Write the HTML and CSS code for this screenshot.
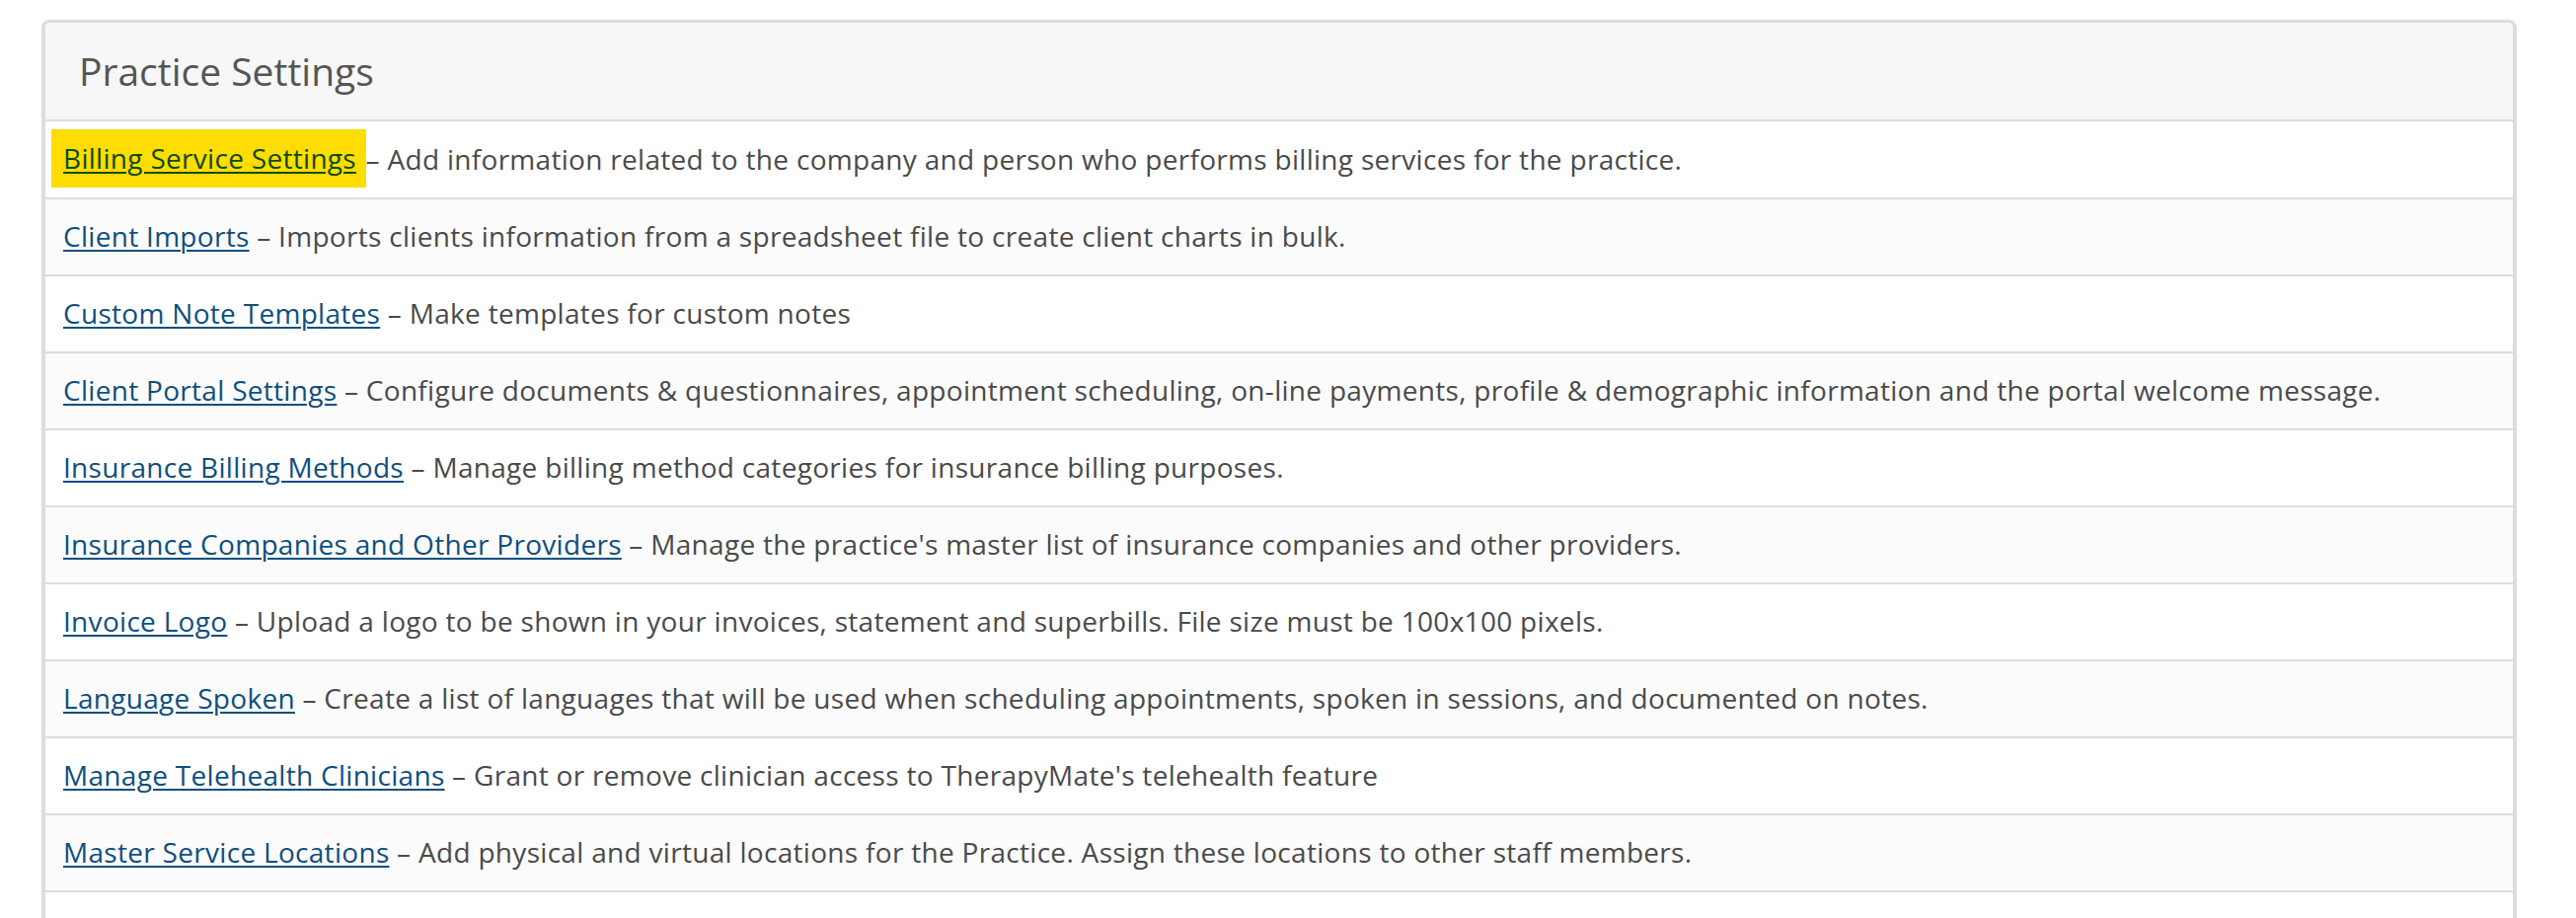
FILE: index.html
```html
<!DOCTYPE html>
<html lang="en">
<head>
<meta charset="utf-8">
<title>Practice Settings</title>
<link rel="stylesheet" href="styles.css">
</head>
<body>
<div class="page">
  <div class="panel">
    <div class="panel-heading">Practice Settings</div>
    <ul class="list">
      <li class="item first"><span class="hl"><a href="#">Billing Service Settings</a> </span>– Add information related to the company and person who performs billing services for the practice.</li>
      <li class="item"><a href="#">Client Imports</a> – Imports clients information from a spreadsheet file to create client charts in bulk.</li>
      <li class="item"><a href="#">Custom Note Templates</a> – Make templates for custom notes</li>
      <li class="item"><a href="#">Client Portal Settings</a> – Configure documents &amp; questionnaires, appointment scheduling, on-line payments, profile &amp; demographic information and the portal welcome message.</li>
      <li class="item"><a href="#">Insurance Billing Methods</a> – Manage billing method categories for insurance billing purposes.</li>
      <li class="item"><a href="#">Insurance Companies and Other Providers</a> – Manage the practice's master list of insurance companies and other providers.</li>
      <li class="item"><a href="#">Invoice Logo</a> – Upload a logo to be shown in your invoices, statement and superbills. File size must be 100x100 pixels.</li>
      <li class="item"><a href="#">Language Spoken</a> – Create a list of languages that will be used when scheduling appointments, spoken in sessions, and documented on notes.</li>
      <li class="item"><a href="#">Manage Telehealth Clinicians</a> – Grant or remove clinician access to TherapyMate's telehealth feature</li>
      <li class="item"><a href="#">Master Service Locations</a> – Add physical and virtual locations for the Practice. Assign these locations to other staff members.</li>
      <li class="item"></li>
    </ul>
  </div>
</div>
</body>
</html>
```
FILE: styles.css
```css
html, body {
  margin: 0;
  padding: 0;
  background: #ffffff;
}
body {
  font-family: "Open Sans", "Liberation Sans", sans-serif;
  color: #4a4a4a;
  overflow: hidden;
}
.page {
  padding: 20px 60px 0 42px;
}
.panel {
  border: 4px solid #dddddd;
  border-top-width: 3px;
  border-bottom: none;
  border-radius: 8px 8px 0 0;
  overflow: hidden;
}
.panel-heading {
  background: #f7f7f7;
  height: 96px;
  padding-bottom: 2px;
  display: flex;
  align-items: center;
  padding-left: 34px;
  font-size: 39px;
  color: #555555;
  border-bottom: 2px solid #dddddd;
}
.list {
  list-style: none;
  margin: 0;
  padding: 0;
}
.item {
  height: 74px;
  padding-bottom: 2px;
  display: flex;
  align-items: center;
  padding-left: 18px;
  font-size: 28px;
  letter-spacing: 0.3px;
  white-space: pre;
  border-bottom: 2px solid #dddddd;
  background: #ffffff;
}
.item:nth-child(even) {
  background: #fbfbfb;
}
.item.first {
  height: 75px;
}
.item a {
  color: #0d4f80;
  text-decoration: underline;
  text-decoration-thickness: 2px;
  text-underline-offset: 3px;
}
.hl {
  display: inline-block;
  background: #ffdd00;
  height: 59px;
  line-height: 59px;
  margin-left: -12px;
  padding: 0 2px 0 12px;
}
.hl a {
  color: #0b4a12;
}
```
